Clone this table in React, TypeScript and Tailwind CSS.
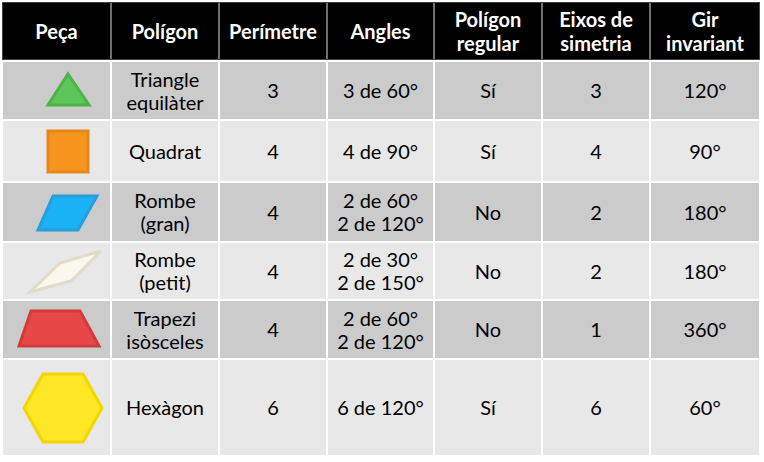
const cols =
  "grid grid-cols-[107px_106px_106px_105px_106px_106px_108px] gap-x-[2px]";

type Shape = {
  pts: string;
  fill: string;
  stroke: string;
};

type Row = {
  h: string;
  top: number;
  height: number;
  bg: string;
  shape: Shape;
  cells: string[][];
};

const rows: Row[] = [
  {
    h: "h-[57px]",
    top: 62,
    height: 57,
    bg: "bg-[#cbcbcb]",
    shape: { pts: "68,74 89,105 48,105", fill: "#5cc65a", stroke: "#4bb447" },
    cells: [["Triangle", "equilàter"], ["3"], ["3 de 60°"], ["Sí"], ["3"], ["120°"]],
  },
  {
    h: "h-[60px]",
    top: 121,
    height: 60,
    bg: "bg-[#e8e8e8]",
    shape: { pts: "48,131 88,131 88,172 48,172", fill: "#f7941d", stroke: "#e6881a" },
    cells: [["Quadrat"], ["4"], ["4 de 90°"], ["Sí"], ["4"], ["90°"]],
  },
  {
    h: "h-[58px]",
    top: 183,
    height: 58,
    bg: "bg-[#cbcbcb]",
    shape: { pts: "53,196 97,196 78,230 38,230", fill: "#1bb2f6", stroke: "#2a9edb" },
    cells: [["Rombe", "(gran)"], ["4"], ["2 de 60°", "2 de 120°"], ["No"], ["2"], ["180°"]],
  },
  {
    h: "h-[56px]",
    top: 243,
    height: 56,
    bg: "bg-[#e8e8e8]",
    shape: { pts: "30,292 60,263 101,251 71,281", fill: "#faf7ec", stroke: "#e2dbc9" },
    cells: [["Rombe", "(petit)"], ["4"], ["2 de 30°", "2 de 150°"], ["No"], ["2"], ["180°"]],
  },
  {
    h: "h-[57px]",
    top: 301,
    height: 57,
    bg: "bg-[#cbcbcb]",
    shape: { pts: "31,311 80,311 99,346 19,346", fill: "#e84747", stroke: "#d23b3b" },
    cells: [["Trapezi", "isòsceles"], ["4"], ["2 de 60°", "2 de 120°"], ["No"], ["1"], ["360°"]],
  },
  {
    h: "h-[95px]",
    top: 360,
    height: 95,
    bg: "bg-[#e8e8e8]",
    shape: {
      pts: "43,374 83,374 102,408 83,442 43,442 24,408",
      fill: "#ffe725",
      stroke: "#f3d500",
    },
    cells: [["Hexàgon"], ["6"], ["6 de 120°"], ["Sí"], ["6"], ["60°"]],
  },
];

const headers = [
  ["Peça"],
  ["Polígon"],
  ["Perímetre"],
  ["Angles"],
  ["Polígon", "regular"],
  ["Eixos de", "simetria"],
  ["Gir", "invariant"],
];

function Lines({ lines }: { lines: string[] }) {
  return (
    <div className="flex flex-col items-center">
      {lines.map((l) => (
        <span key={l}>{l}</span>
      ))}
    </div>
  );
}

export default function App() {
  return (
    <div className="w-[764px] h-[462px] bg-white pt-[3px] pl-[3px] font-['Lato','Open_Sans',sans-serif]">
      {/* Header */}
      <div className={`${cols} w-[756px] h-[56px] bg-[#6f6f6f] ring-1 ring-[#404040]`}>
        {headers.map((h, i) => (
          <div
            key={i}
            className="bg-black text-white font-bold text-[20px] leading-[24px] flex items-center justify-center text-center"
          >
            <Lines lines={h} />
          </div>
        ))}
      </div>

      {/* Body */}
      <div className="mt-[3px] flex flex-col gap-y-[2px] w-[756px]">
        {rows.map((r, ri) => (
          <div key={ri} className={`${cols} ${r.h}`}>
            <div className={`${r.bg}`}>
              <svg
                width={107}
                height={r.height}
                viewBox={`3 ${r.top} 107 ${r.height}`}
                className="block"
              >
                <polygon
                  points={r.shape.pts}
                  fill={r.shape.fill}
                  stroke={r.shape.stroke}
                  strokeWidth={3}
                  strokeLinejoin="miter"
                />
              </svg>
            </div>
            {r.cells.map((c, ci) => (
              <div
                key={ci}
                className={`${r.bg} text-black text-[20px] leading-[23px] flex items-center justify-center text-center`}
              >
                <Lines lines={c} />
              </div>
            ))}
          </div>
        ))}
      </div>
    </div>
  );
}
